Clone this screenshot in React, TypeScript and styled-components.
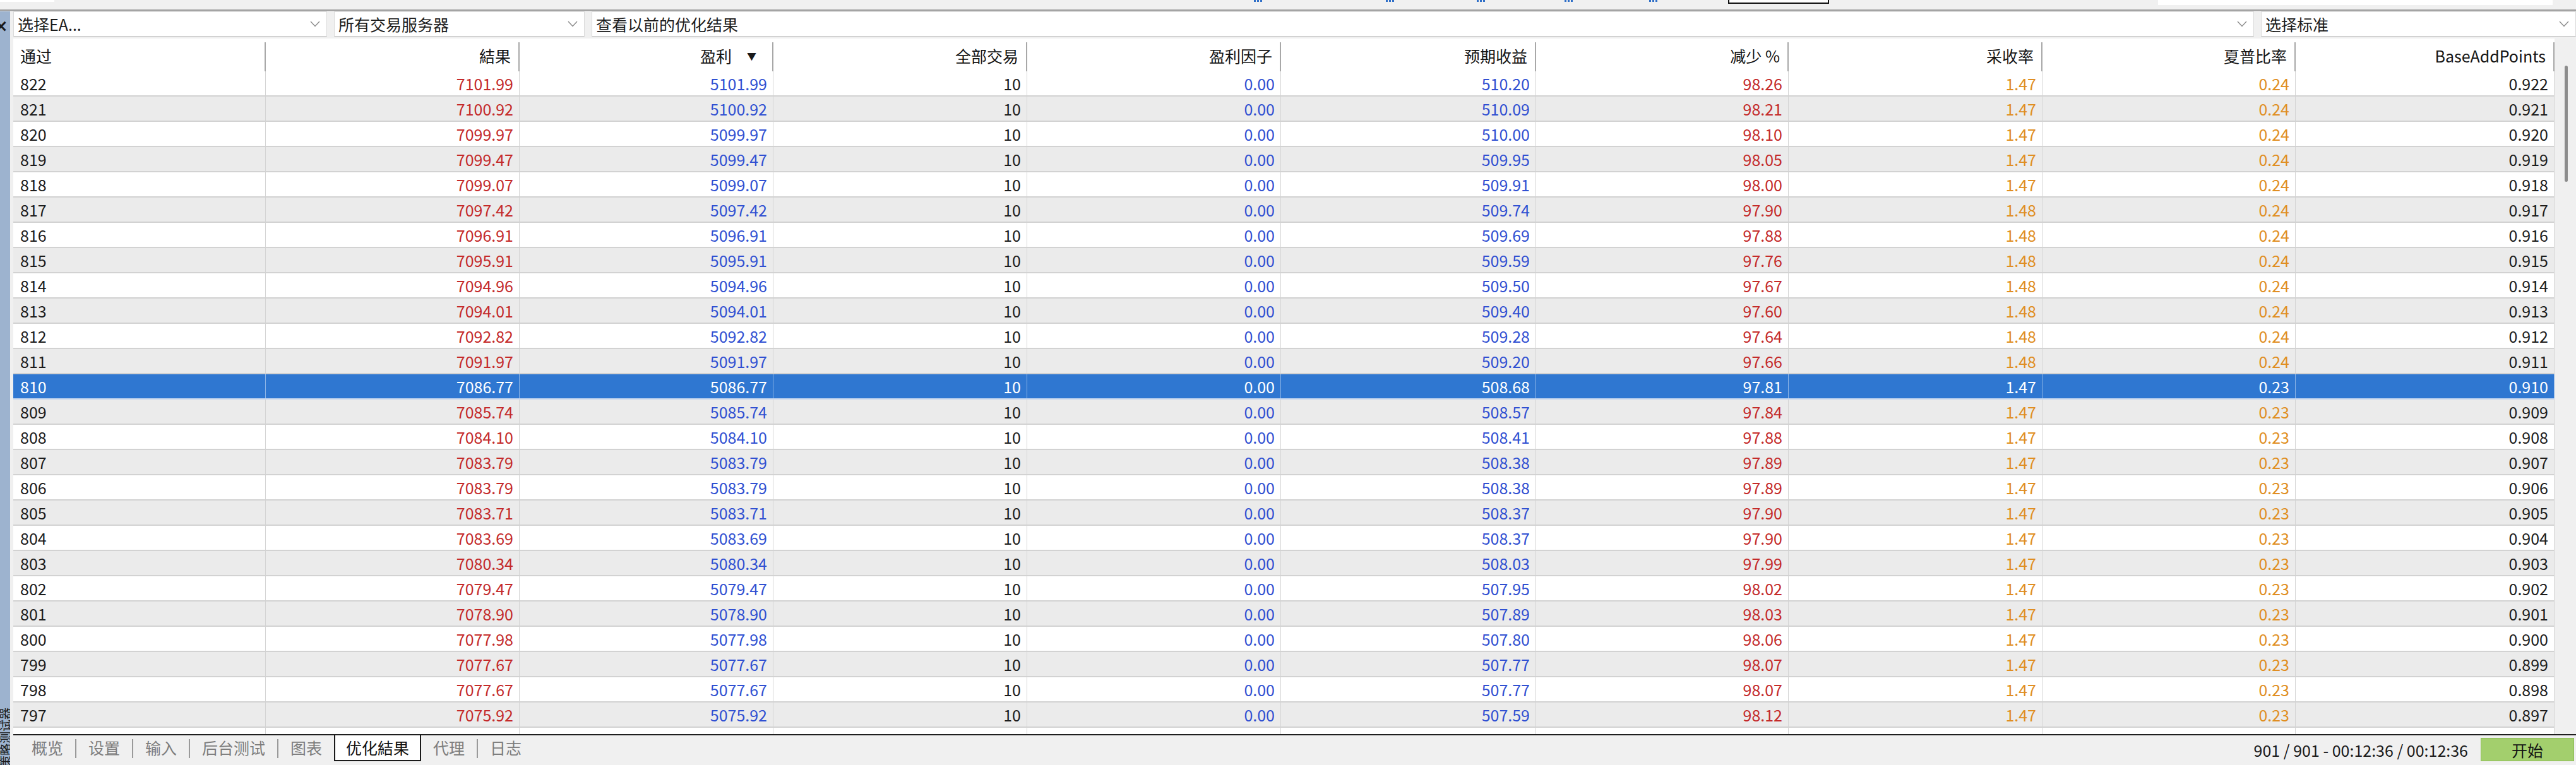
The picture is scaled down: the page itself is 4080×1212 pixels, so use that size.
import React from "react";
import styled, { createGlobalStyle } from "styled-components";

/* ===== global ===== */
const GlobalStyle = createGlobalStyle`
  html, body {
    margin: 0;
    padding: 0;
    background: #f0f0f0;
  }
  body {
    font-family: "Noto Sans CJK SC", "Noto Sans", sans-serif;
  }
`;

type Tone = "plain" | "red" | "blue" | "orange";

const TONES: Record<Tone, string> = {
  plain: "#1c1c1c",
  red: "#c42a2a",
  blue: "#3050d2",
  orange: "#e08e22",
};

const COLUMNS: { title: string; width: number; tone: Tone; sorted?: boolean }[] = [
  { title: "通过", width: 400, tone: "plain" },
  { title: "結果", width: 402, tone: "red" },
  { title: "盈利", width: 402, tone: "blue", sorted: true },
  { title: "全部交易", width: 402, tone: "plain" },
  { title: "盈利因子", width: 402, tone: "blue" },
  { title: "预期收益", width: 404, tone: "blue" },
  { title: "减少 %", width: 400, tone: "red" },
  { title: "采收率", width: 402, tone: "orange" },
  { title: "夏普比率", width: 401, tone: "orange" },
  { title: "BaseAddPoints", width: 410, tone: "plain" },
];

const GRID = COLUMNS.map(c => `${c.width}px`).join(" ");

// pass, result, profit, expected payoff, drawdown, recovery, sharpe, BaseAddPoints
const RAW = `
822 7101.99 5101.99 510.20 98.26 1.47 0.24 0.922
821 7100.92 5100.92 510.09 98.21 1.47 0.24 0.921
820 7099.97 5099.97 510.00 98.10 1.47 0.24 0.920
819 7099.47 5099.47 509.95 98.05 1.47 0.24 0.919
818 7099.07 5099.07 509.91 98.00 1.47 0.24 0.918
817 7097.42 5097.42 509.74 97.90 1.48 0.24 0.917
816 7096.91 5096.91 509.69 97.88 1.48 0.24 0.916
815 7095.91 5095.91 509.59 97.76 1.48 0.24 0.915
814 7094.96 5094.96 509.50 97.67 1.48 0.24 0.914
813 7094.01 5094.01 509.40 97.60 1.48 0.24 0.913
812 7092.82 5092.82 509.28 97.64 1.48 0.24 0.912
811 7091.97 5091.97 509.20 97.66 1.48 0.24 0.911
810 7086.77 5086.77 508.68 97.81 1.47 0.23 0.910
809 7085.74 5085.74 508.57 97.84 1.47 0.23 0.909
808 7084.10 5084.10 508.41 97.88 1.47 0.23 0.908
807 7083.79 5083.79 508.38 97.89 1.47 0.23 0.907
806 7083.79 5083.79 508.38 97.89 1.47 0.23 0.906
805 7083.71 5083.71 508.37 97.90 1.47 0.23 0.905
804 7083.69 5083.69 508.37 97.90 1.47 0.23 0.904
803 7080.34 5080.34 508.03 97.99 1.47 0.23 0.903
802 7079.47 5079.47 507.95 98.02 1.47 0.23 0.902
801 7078.90 5078.90 507.89 98.03 1.47 0.23 0.901
800 7077.98 5077.98 507.80 98.06 1.47 0.23 0.900
799 7077.67 5077.67 507.77 98.07 1.47 0.23 0.899
798 7077.67 5077.67 507.77 98.07 1.47 0.23 0.898
797 7075.92 5075.92 507.59 98.12 1.47 0.23 0.897
`;

const ROWS = RAW.trim()
  .split("\n")
  .map(line => {
    const [pass, result, profit, expected, dd, recovery, sharpe, base] = line.split(" ");
    return [pass, result, profit, "10", "0.00", expected, dd, recovery, sharpe, base];
  });

const SELECTED_PASS = "810";

/* ===== layout ===== */
const Screen = styled.div`
  width: 4080px;
  height: 1212px;
  display: flex;
  flex-direction: column;
  overflow: hidden;
  background: #f0f0f0;
  color: #1c1c1c;
  font-size: 25px;
`;

const TopStrip = styled.div`
  height: 15px;
  flex: none;
  display: flex;
  align-items: flex-start;
  border-bottom: 2px solid #9d9d9d;
  box-shadow: 0 1px 0 #d2d2d2;
  box-sizing: content-box;
  position: relative;
  z-index: 1;
`;

const StripField = styled.div<{ $w: number; $h: number; $ml: number; $outlined?: boolean }>`
  width: ${p => p.$w}px;
  height: ${p => p.$h}px;
  margin-left: ${p => p.$ml}px;
  background: #ffffff;
  box-sizing: border-box;
  border: ${p => (p.$outlined ? "2px solid #111" : "none")};
  border-top: none;
`;

const StripMark = styled.div<{ $ml: number }>`
  width: 14px;
  height: 3px;
  margin-left: ${p => p.$ml}px;
  background: repeating-linear-gradient(90deg, #2f6fc8 0 3px, transparent 3px 5px);
`;

const Body = styled.div`
  flex: 1;
  display: flex;
  min-height: 0;
  padding-top: 1px;
`;

const SideBar = styled.div`
  width: 16px;
  flex: none;
  background: #9db3cf;
  display: flex;
  flex-direction: column;
  justify-content: space-between;
  overflow: hidden;
`;

const CloseGlyph = styled.div`
  margin-top: 8px;
  margin-left: -9px;
  font-family: "DejaVu Sans", sans-serif;
  font-size: 26px;
  font-weight: bold;
  line-height: 30px;
  color: #1a1a1a;
`;

const SideTitle = styled.div`
  writing-mode: vertical-rl;
  text-orientation: sideways;
  transform: rotate(180deg);
  font-size: 19px;
  line-height: 16px;
  color: #1a1a1a;
  white-space: nowrap;
  margin-bottom: -4px;
`;

const Content = styled.div`
  flex: 1;
  display: flex;
  flex-direction: column;
  padding-left: 5px;
  min-width: 0;
`;

const FilterBar = styled.div`
  height: 43px;
  flex: none;
  display: flex;
  gap: 11px;
`;

const Dropdown = styled.div<{ $w?: number }>`
  ${p => (p.$w ? `width: ${p.$w}px;` : "flex: 1;")}
  height: 40px;
  box-sizing: border-box;
  background: #ffffff;
  border: 1px solid #dadada;
  border-bottom-color: #c4c4c4;
  display: flex;
  align-items: center;
  justify-content: space-between;
  padding: 0 10px 0 6px;
  font-size: 25px;
`;

const Chevron = () => (
  <svg width="16" height="10" viewBox="0 0 16 10">
    <polyline points="1,1 8,8.5 15,1" fill="none" stroke="#8a8a8a" strokeWidth="1.4" />
  </svg>
);

const GridArea = styled.div`
  flex: 1;
  display: flex;
  min-height: 0;
`;

const Table = styled.div`
  width: 4025px;
  flex: none;
  display: flex;
  flex-direction: column;
  overflow: hidden;
  background: #ffffff;
`;

const HeaderRow = styled.div`
  height: 52px;
  flex: none;
  display: grid;
  grid-template-columns: ${GRID};
  padding-top: 6px;
  box-sizing: border-box;
  background: #ffffff;
`;

const HeaderCell = styled.div<{ $left?: boolean }>`
  display: flex;
  align-items: center;
  justify-content: ${p => (p.$left ? "flex-start" : "flex-end")};
  padding: ${p => (p.$left ? "0 0 4px 11px" : "0 12px 4px 0")};
  border-right: 2px solid #a8a8a8;
  white-space: nowrap;
  color: #141414;
`;

const SortMark = styled.span`
  font-size: 15px;
  margin-left: 24px;
  margin-right: 13px;
  color: #1a1a1a;
`;

const Row = styled.div<{ $alt: boolean; $selected: boolean }>`
  height: 40px;
  flex: none;
  display: grid;
  grid-template-columns: ${GRID};
  box-sizing: border-box;
  border-bottom: 2px solid ${p => (p.$selected ? "#c6d6ee" : "#d2d2d2")};
  background: ${p => (p.$selected ? "#2f77d1" : p.$alt ? "#ebebeb" : "#ffffff")};
`;

const Cell = styled.div<{ $tone: Tone; $left?: boolean; $selected: boolean }>`
  display: flex;
  align-items: center;
  justify-content: ${p => (p.$left ? "flex-start" : "flex-end")};
  padding: ${p => (p.$left ? "0 0 0 11px" : "0 9px 0 0")};
  border-right: 1px solid ${p => (p.$selected ? "rgba(255,255,255,0.45)" : "#d4d4d4")};
  color: ${p => (p.$selected ? "#ffffff" : TONES[p.$tone])};
  white-space: nowrap;
`;

const ScrollTrack = styled.div`
  flex: 1;
  background: #f0f0f0;
  padding-top: 43px;
  padding-left: 16px;
`;

const ScrollThumb = styled.div`
  width: 5px;
  height: 184px;
  border-radius: 3px;
  background: #8c8c8c;
`;

const TabBar = styled.div`
  height: 49px;
  flex: none;
  box-sizing: border-box;
  border-top: 2px solid #1e1e1e;
  display: flex;
  align-items: flex-start;
  justify-content: space-between;
`;

const TabList = styled.div`
  display: flex;
  align-items: center;
  height: 41px;
  padding-left: 10px;
`;

const Tab = styled.div<{ $active?: boolean }>`
  height: 41px;
  box-sizing: border-box;
  display: flex;
  align-items: center;
  padding: 0 17px 2px;
  color: ${p => (p.$active ? "#111111" : "#7d7d7d")};
  background: ${p => (p.$active ? "#ffffff" : "transparent")};
  border: 2px solid ${p => (p.$active ? "#1a1a1a" : "transparent")};
  border-top: none;
  white-space: nowrap;
`;

const TabSep = styled.div`
  width: 2px;
  height: 30px;
  background: #9a9a9a;
`;

const StatusArea = styled.div`
  display: flex;
  align-items: center;
  gap: 20px;
  padding: 4px 3px 0 0;
`;

const StatusText = styled.div`
  color: #1a1a1a;
  white-space: pre;
`;

const StartButton = styled.div`
  width: 148px;
  height: 37px;
  box-sizing: border-box;
  background: #a3cf6d;
  border: 1px solid #8dbb57;
  display: flex;
  align-items: center;
  justify-content: center;
  color: #141414;
`;

const TABS: { label: string; active?: boolean }[] = [
  { label: "概览" },
  { label: "设置" },
  { label: "输入" },
  { label: "后台测试" },
  { label: "图表" },
  { label: "优化結果", active: true },
  { label: "代理" },
  { label: "日志" },
];

export default function App() {
  return (
    <>
      <GlobalStyle />
      <Screen>
        <TopStrip>
          <StripField $w={86} $h={3} $ml={0} />
          <StripMark $ml={1900} />
          <StripMark $ml={195} />
          <StripMark $ml={130} />
          <StripMark $ml={125} />
          <StripMark $ml={120} />
          <StripField $w={160} $h={6} $ml={111} $outlined />
          <StripField $w={625} $h={8} $ml={521} />
        </TopStrip>

        <Body>
          <SideBar>
            <CloseGlyph>×</CloseGlyph>
            <SideTitle>策略测试器</SideTitle>
          </SideBar>

          <Content>
            <FilterBar>
              <Dropdown $w={497}>
                <span>选择EA...</span>
                <Chevron />
              </Dropdown>
              <Dropdown $w={397}>
                <span>所有交易服务器</span>
                <Chevron />
              </Dropdown>
              <Dropdown $w={2633}>
                <span>查看以前的优化结果</span>
                <Chevron />
              </Dropdown>
              <Dropdown>
                <span>选择标准</span>
                <Chevron />
              </Dropdown>
            </FilterBar>

            <GridArea>
              <Table>
                <HeaderRow>
                  {COLUMNS.map((col, i) => (
                    <HeaderCell key={col.title} $left={i === 0}>
                      {col.title}
                      {col.sorted && <SortMark>▼</SortMark>}
                    </HeaderCell>
                  ))}
                </HeaderRow>
                {ROWS.map((row, r) => {
                  const selected = row[0] === SELECTED_PASS;
                  return (
                    <Row key={row[0]} $alt={r % 2 === 1} $selected={selected}>
                      {row.map((value, c) => (
                        <Cell key={c} $tone={COLUMNS[c].tone} $left={c === 0} $selected={selected}>
                          {value}
                        </Cell>
                      ))}
                    </Row>
                  );
                })}
                {/* next row, scrolled mostly out of view */}
                <Row $alt={false} $selected={false}>
                  {COLUMNS.map(col => (
                    <Cell key={col.title} $tone="plain" $selected={false} />
                  ))}
                </Row>
              </Table>
              <ScrollTrack>
                <ScrollThumb />
              </ScrollTrack>
            </GridArea>

            <TabBar>
              <TabList>
                {TABS.map((tab, i) => {
                  const next = TABS[i + 1];
                  const showSep = next && !tab.active && !next.active;
                  return (
                    <React.Fragment key={tab.label}>
                      <Tab $active={tab.active}>{tab.label}</Tab>
                      {showSep && <TabSep />}
                    </React.Fragment>
                  );
                })}
              </TabList>
              <StatusArea>
                <StatusText>{"901 / 901 - 00:12:36 / 00:12:36"}</StatusText>
                <StartButton>开始</StartButton>
              </StatusArea>
            </TabBar>
          </Content>
        </Body>
      </Screen>
    </>
  );
}
